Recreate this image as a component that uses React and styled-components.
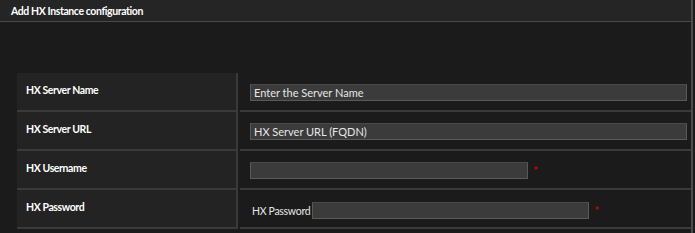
import React from 'react'
import styled, { createGlobalStyle } from 'styled-components'

const GlobalStyle = createGlobalStyle`
  html, body {
    margin: 0;
    padding: 0;
    background: #1b1b1b;
  }
  body {
    font-family: Lato, 'Liberation Sans', sans-serif;
  }
`

const Panel = styled.div`
  width: 691px;
  height: 233px;
  background: #1b1b1b;
  border-right: 2px solid #4c4c4c;
  overflow: hidden;
`

const Header = styled.div`
  height: 21px;
  background: #252525;
  border-bottom: 1px solid #4a4a4a;
  display: flex;
  align-items: center;
  padding-left: 11px;
  color: #fff;
  font-weight: 700;
  font-size: 10.5px;
  letter-spacing: -0.4px;
`

const Body = styled.div`
  padding: 51px 0 0 17px;
`

const Grid = styled.div`
  display: grid;
  grid-template-columns: 221px 1fr;
  column-gap: 2px;
`

const LabelCell = styled.div`
  background: #232323;
  border-right: 2px solid #3a3a3a;
  border-bottom: 2px solid #3a3a3a;
  color: #fff;
  font-weight: 700;
  font-size: 10.5px;
  letter-spacing: -0.4px;
  padding: 11px 0 0 9px;
  box-sizing: border-box;
  height: 39px;
`

const FieldCell = styled.div`
  border-bottom: 2px solid #3a3a3a;
  display: flex;
  align-items: center;
  padding: ${p => p.$top || 2}px 4px 0 10px;
  box-sizing: border-box;
  height: 39px;
  color: #e6e6e6;
  font-size: 11px;
`

const Input = styled.div`
  box-sizing: border-box;
  height: 17px;
  width: ${p => (p.$w ? `${p.$w}px` : 'auto')};
  flex: ${p => (p.$w ? 'none' : '1')};
  background: #3b3b3b;
  border: 1px solid #595959;
  border-top-color: #4a4a4a;
  display: flex;
  align-items: center;
  padding-left: 3px;
  color: #e6e6e6;
  font-size: 11px;
`

const Star = styled.span`
  color: #d00000;
  font-size: 12px;
  font-weight: 700;
  margin-left: 5px;
  line-height: 1;
`

const Prefix = styled.span`
  margin: 0 2px 0 2px;
  font-size: 10.5px;
  letter-spacing: -0.3px;
`

export default function App () {
  return (
    <>
      <GlobalStyle />
      <Panel>
        <Header>Add HX Instance configuration</Header>
        <Body>
          <Grid>
            <LabelCell>HX Server Name</LabelCell>
            <FieldCell><Input>Enter the Server Name</Input></FieldCell>

            <LabelCell>HX Server URL</LabelCell>
            <FieldCell><Input>HX Server URL (FQDN)</Input></FieldCell>

            <LabelCell>HX Username</LabelCell>
            <FieldCell><Input $w={278} /><Star>*</Star></FieldCell>

            <LabelCell>HX Password</LabelCell>
            <FieldCell $top={4}>
              <Prefix>HX Password</Prefix>
              <Input $w={277} />
              <Star>*</Star>
            </FieldCell>
          </Grid>
        </Body>
      </Panel>
    </>
  )
}
